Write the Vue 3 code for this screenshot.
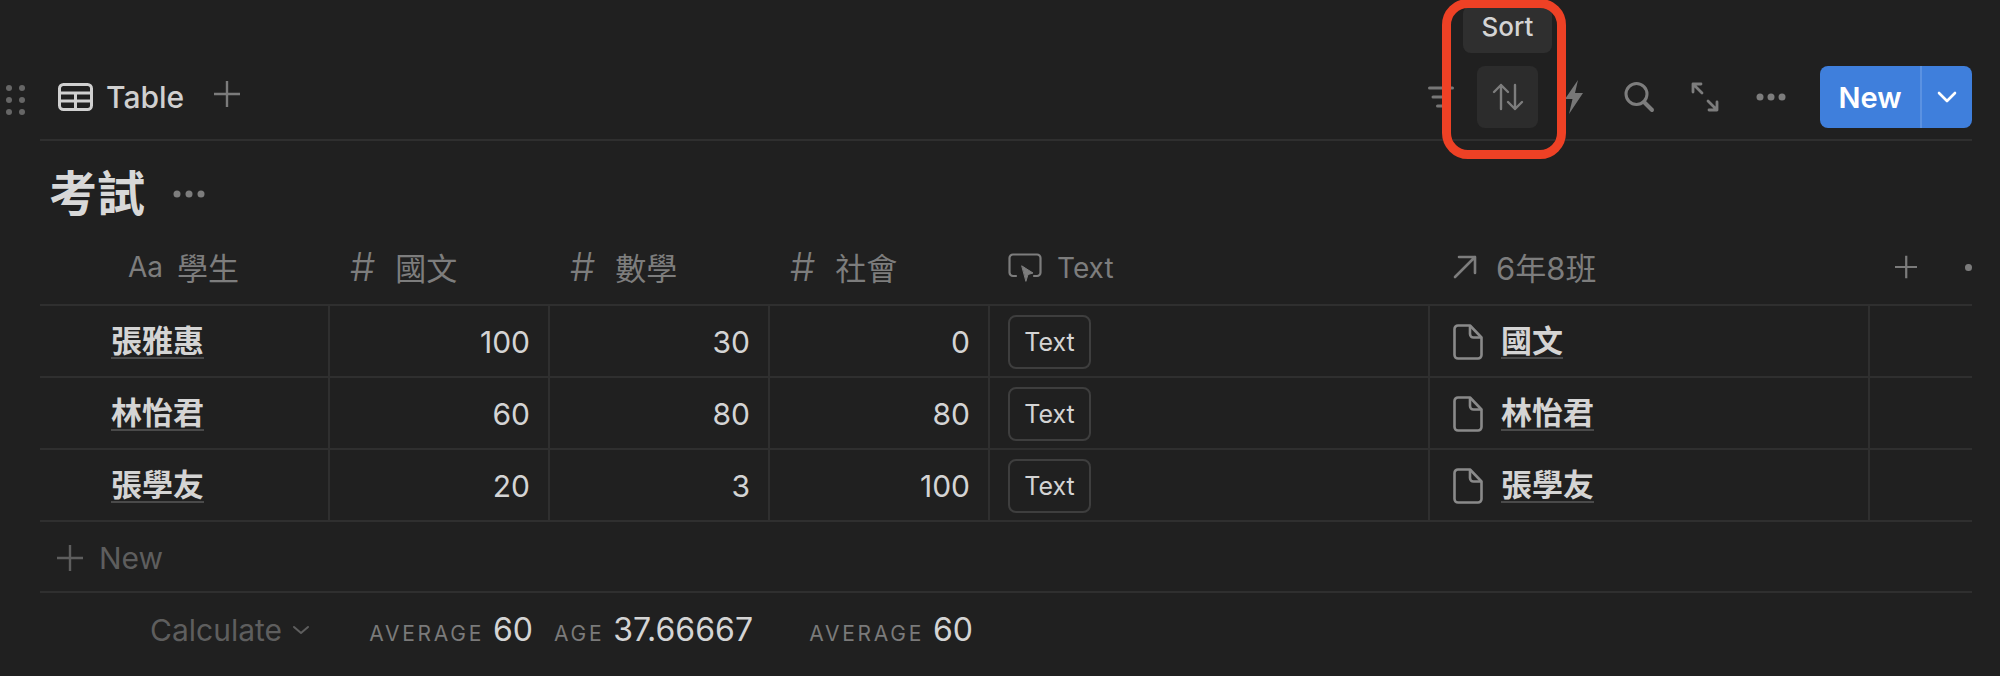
<script setup>
const students = [
  { name: '張雅惠', chinese: 100, math: 30, social: 0, page: '國文' },
  { name: '林怡君', chinese: 60, math: 80, social: 80, page: '林怡君' },
  { name: '張學友', chinese: 20, math: 3, social: 100, page: '張學友' },
]
</script>

<template>
  <div class="page">
    <div class="handle"><i v-for="n in 6" :key="n"></i></div>

    <header class="toolbar">
      <div class="tab">
        <svg class="tab-icon" viewBox="0 0 35 28" fill="none" stroke="#d0d0d0" stroke-width="3">
          <rect x="1.500" y="1.500" width="32" height="25" rx="4" />
          <path d="M1.500 10h32M1.500 18h32M17.500 10v16.500" />
        </svg>
        <span>Table</span>
        <svg class="tab-plus" viewBox="0 0 26 26" stroke="#7b7b7b" stroke-width="2.400">
          <path d="M13 0v26M0 13h26" />
        </svg>
      </div>

      <div class="actions">
        <button class="tool">
          <svg width="26" height="24" viewBox="0 0 26 24" fill="none" stroke="#777" stroke-width="3" stroke-linecap="round">
            <path d="M1.500 3h23M5 12h16M9.500 21h7" />
          </svg>
        </button>
        <button class="tool active">
          <svg width="32" height="30" viewBox="0 0 32 30" fill="none" stroke="#7d7d7d" stroke-width="2.400" stroke-linecap="round" stroke-linejoin="round">
            <path d="M9 27V3M2 10l7-7 7 7M23 3v24M16 20l7 7 7-7" />
          </svg>
        </button>
        <button class="tool bolt">
          <svg width="20" height="34" viewBox="0 0 20 34" fill="#777">
            <path d="M14 0 1 19h7.500L5 34 19 13h-8z" />
          </svg>
        </button>
        <button class="tool">
          <svg width="32" height="34" viewBox="0 0 32 34" fill="none" stroke="#7d7d7d" stroke-linecap="round">
            <circle cx="13.500" cy="14" r="10.500" stroke-width="3" />
            <path d="M21 22l8 8" stroke-width="4" />
          </svg>
        </button>
        <button class="tool">
          <svg width="28" height="30" viewBox="0 0 28 30" fill="none" stroke="#7d7d7d" stroke-width="2.800" stroke-linecap="round" stroke-linejoin="round">
            <path d="M2 10V2h8M2 2l9 9M26 20v8h-8M26 28l-9-9" />
          </svg>
        </button>
        <button class="tool">
          <svg width="30" height="8" viewBox="0 0 30 8" fill="#7d7d7d">
            <circle cx="4" cy="4" r="3.500" /><circle cx="15" cy="4" r="3.500" /><circle cx="26" cy="4" r="3.500" />
          </svg>
        </button>
        <div class="new-btn">
          <span class="new-label">New</span>
          <span class="new-arrow">
            <svg width="20" height="12" viewBox="0 0 20 12" fill="none" stroke="#fff" stroke-width="2.600" stroke-linecap="round" stroke-linejoin="round">
              <path d="M2 2l8 8 8-8" />
            </svg>
          </span>
        </div>
      </div>
    </header>

    <div class="title-row">
      <h1>考試</h1>
      <svg width="32" height="8" viewBox="0 0 32 8" fill="#7d7d7d">
        <circle cx="4" cy="4" r="3.500" /><circle cx="16" cy="4" r="3.500" /><circle cx="28" cy="4" r="3.500" />
      </svg>
    </div>

    <div class="row head">
      <div class="th name-head"><span class="aa">Aa</span> 學生</div>
      <div class="th"><span class="hash">#</span> 國文</div>
      <div class="th"><span class="hash">#</span> 數學</div>
      <div class="th"><span class="hash">#</span> 社會</div>
      <div class="th text-head">
        <svg width="34" height="30" viewBox="0 0 34 30" fill="none" stroke="#7d7d7d" stroke-width="2.200" stroke-linecap="round">
          <path d="M8 23H5a3.500 3.500 0 0 1-3.500-3.500V5A3.500 3.500 0 0 1 5 1.500h24A3.500 3.500 0 0 1 32.500 5v14.500A3.500 3.500 0 0 1 29 23h-3" />
          <path d="M14 13l11 7-5 1.500 -2 6.500z" fill="#7d7d7d" stroke-linejoin="round" stroke-width="1" />
        </svg>
        Text
      </div>
      <div class="th rel-head">
        <svg width="24" height="24" viewBox="0 0 24 24" fill="none" stroke="#7d7d7d" stroke-width="2.600" stroke-linecap="round" stroke-linejoin="round">
          <path d="M2 22L22 2M6 2h16v16" />
        </svg>
        6年8班
      </div>
      <div class="th head-end">
        <svg width="24" height="24" viewBox="0 0 24 24" stroke="#7b7b7b" stroke-width="2.400"><path d="M12 0v24M0 12h24" /></svg>
        <i class="dot"></i>
      </div>
    </div>

    <div v-for="s in students" :key="s.name" class="row body">
      <div class="td name"><span class="link">{{ s.name }}</span></div>
      <div class="td num">{{ s.chinese }}</div>
      <div class="td num">{{ s.math }}</div>
      <div class="td num">{{ s.social }}</div>
      <div class="td"><span class="text-btn">Text</span></div>
      <div class="td page-cell">
        <svg width="30" height="36" viewBox="0 0 30 36" fill="none" stroke="#8a8a8a" stroke-width="2.600" stroke-linejoin="round">
          <path d="M5 1.500h12l11.500 12V31a3.500 3.500 0 0 1-3.500 3.500H5A3.500 3.500 0 0 1 1.500 31V5A3.500 3.500 0 0 1 5 1.500z" />
          <path d="M17 1.500V10a3.500 3.500 0 0 0 3.500 3.500h8" />
        </svg>
        <span class="link">{{ s.page }}</span>
      </div>
      <div class="td last"></div>
    </div>

    <div class="add-row">
      <svg width="26" height="26" viewBox="0 0 26 26" stroke="#5e5e5e" stroke-width="2.400"><path d="M13 0v26M0 13h26" /></svg>
      <span>New</span>
    </div>

    <div class="row foot">
      <div class="calc">
        Calculate
        <svg width="18" height="10" viewBox="0 0 18 10" fill="none" stroke="#5e5e5e" stroke-width="2" stroke-linecap="round" stroke-linejoin="round">
          <path d="M2 2l7 6 7-6" />
        </svg>
      </div>
      <div class="stat"><small>AVERAGE</small> 60</div>
      <div class="stat"><small>AGE</small> 37.66667</div>
      <div class="stat"><small>AVERAGE</small> 60</div>
    </div>

    <!-- annotation drawn over the screenshot -->
    <div class="tooltip">Sort</div>
    <div class="marker"></div>
  </div>
</template>

<style>
html,
body {
  margin: 0;
  background: #202020;
}
</style>

<style scoped>
.page {
  position: relative;
  box-sizing: border-box;
  width: 2000px;
  height: 676px;
  padding: 0 28px 0 40px;
  overflow: hidden;
  background: #202020;
  color: #d4d4d4;
  font-family: Inter, "Noto Sans CJK TC", sans-serif;
  font-size: 30px;
}

.handle {
  position: absolute;
  left: 6px;
  top: 85px;
  display: grid;
  grid-template-columns: 6px 6px;
  gap: 6px 7px;
}

.handle i {
  width: 6px;
  height: 6px;
  border-radius: 50%;
  background: #666;
}

.toolbar {
  box-sizing: border-box;
  height: 141px;
  padding-top: 66px;
  display: flex;
  justify-content: space-between;
  align-items: flex-start;
  border-bottom: 2px solid #2f2f2f;
}

.tab {
  height: 62px;
  display: flex;
  align-items: center;
  margin-left: 18px;
  font-size: 30px;
  font-weight: 500;
  color: #d0d0d0;
}

.tab-icon {
  width: 35px;
  height: 28px;
  margin-right: 13px;
}

.tab-plus {
  width: 26px;
  height: 26px;
  margin-left: 30px;
  margin-top: -6px;
}

.actions {
  display: flex;
  align-items: center;
  gap: 5px;
}

.tool {
  width: 61px;
  height: 62px;
  padding: 0;
  border: none;
  border-radius: 8px;
  background: none;
  display: flex;
  align-items: center;
  justify-content: center;
}

.tool.active {
  margin-left: 1px;
  margin-right: -1px;
  background: #2c2c2c;
}

.tool.bolt svg {
  margin-left: 2px;
}

.new-btn {
  width: 152px;
  height: 62px;
  margin-left: 14px;
  display: flex;
  border-radius: 8px;
  background: #3f7fdc;
  color: #fff;
  font-size: 29px;
  font-weight: 600;
}

.new-label {
  width: 100px;
  display: flex;
  align-items: center;
  justify-content: center;
}

.new-arrow {
  flex: 1;
  display: flex;
  align-items: center;
  justify-content: center;
  border-left: 2px solid #5b92e2;
}

.title-row {
  box-sizing: border-box;
  height: 91px;
  padding: 25px 0 10px 9px;
  display: flex;
  align-items: center;
  gap: 28px;
}

h1 {
  margin: 0;
  font-size: 48px;
  font-weight: 700;
  line-height: 56px;
  color: #d8d8d8;
}

.row {
  display: grid;
  grid-template-columns: 288px 220px 220px 220px 440px 440px 104px;
}

.head {
  box-sizing: border-box;
  height: 74px;
  border-bottom: 2px solid #2f2f2f;
  color: #7d7d7d;
  font-size: 31px;
}

.th {
  display: flex;
  align-items: center;
  gap: 20px;
  padding: 0 0 3px 22px;
}

.name-head {
  padding-left: 88px;
  gap: 14px;
}

.aa {
  font-size: 28px;
}

.hash {
  font-size: 40px;
  font-weight: 300;
  line-height: 1;
}

.text-head {
  padding: 0 0 0 20px;
  gap: 15px;
  font-size: 28px;
}

.rel-head {
  padding-left: 25px;
  gap: 19px;
}

.head-end {
  padding: 0 0 2px 27px;
  gap: 48px;
}

.dot {
  width: 7px;
  height: 7px;
  border-radius: 50%;
  background: #7b7b7b;
}

.body {
  box-sizing: border-box;
  height: 72px;
  border-bottom: 2px solid #2f2f2f;
}

.body:last-of-type {
  height: 73px;
}

.td {
  display: flex;
  align-items: center;
  padding: 2px 0 0 18px;
  border-left: 2px solid #2f2f2f;
  min-width: 0;
}

.td.name {
  padding-left: 71px;
  border-left: none;
  font-size: 31px;
  font-weight: 700;
}

.td.num {
  justify-content: flex-end;
  padding-right: 18px;
}

.link {
  border-bottom: 2px solid #4a4a4a;
  line-height: 32px;
}

.text-btn {
  box-sizing: border-box;
  width: 83px;
  height: 54px;
  display: flex;
  align-items: center;
  justify-content: center;
  border: 2px solid #3e3e3e;
  border-radius: 8px;
  font-size: 25px;
}

.page-cell {
  padding-left: 23px;
  gap: 18px;
  font-size: 31px;
  font-weight: 700;
}

.add-row {
  box-sizing: border-box;
  height: 71px;
  padding: 3px 0 0 17px;
  display: flex;
  align-items: center;
  gap: 16px;
  border-bottom: 2px solid #2f2f2f;
  color: #5e5e5e;
}

.foot {
  height: 73px;
  align-items: center;
}

.calc {
  padding-left: 110px;
  display: flex;
  align-items: center;
  gap: 10px;
  color: #5e5e5e;
}

.stat {
  display: flex;
  align-items: baseline;
  justify-content: flex-end;
  gap: 9px;
  padding-right: 15px;
  font-size: 32px;
}

.stat small {
  font-size: 21px;
  letter-spacing: 2.700px;
  color: #7a7a7a;
}

.tooltip {
  position: absolute;
  left: 1463px;
  top: 6px;
  box-sizing: border-box;
  width: 89px;
  height: 47px;
  padding-bottom: 6px;
  display: flex;
  align-items: center;
  justify-content: center;
  border-radius: 8px;
  background: #2f2f2f;
  font-size: 26px;
  font-weight: 500;
}

.marker {
  position: absolute;
  left: 1442px;
  top: -1px;
  box-sizing: border-box;
  width: 124px;
  height: 160px;
  border: 9px solid #ee4125;
  border-radius: 26px;
}
</style>
